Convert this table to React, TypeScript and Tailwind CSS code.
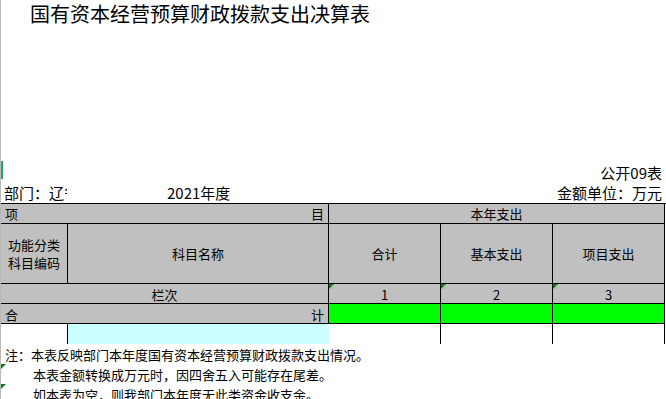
import React from 'react'

// Little Excel "number stored as text" marker in the top-left of a cell
function Flag() {
  return (
    <span className="absolute left-0 top-0 h-0 w-0 border-r-[5px] border-t-[5px] border-r-transparent border-t-[#0a7d0a]" />
  )
}

export default function App() {
  return (
    <div className="relative h-[399px] w-[666px] overflow-hidden border-l border-[#b8b8b8] bg-white font-['Noto_Sans_CJK_SC','Noto_Sans',sans-serif] text-[13px] text-black">
      <span className="absolute left-0 top-[161px] h-[18px] w-[2px] bg-[#21a366]" />

      {/* title block */}
      <div className="h-[163px]">
        <div className="pl-[29px] pt-[1px] text-[20px] leading-[26px]">国有资本经营预算财政拨款支出决算表</div>
      </div>

      <div className="flex h-[20px] items-end justify-end pr-[4px] text-[15px] leading-[20px]">公开09表</div>
      <div className="flex h-[20px] items-end text-[15px] leading-[20px]">
        <span className="w-[66px] overflow-hidden whitespace-nowrap pl-[3px]">部门：辽宁</span>
        <span className="pl-[100px]">2021年度</span>
        <span className="ml-auto pr-[4px]">金额单位：万元</span>
      </div>

      {/* table */}
      <div className="grid w-[665px] grid-cols-[67px_261px_112px_112px_112px] grid-rows-[20px_60px_20px_20px_20px] border-t border-black">
        <div className="col-span-2 flex items-center justify-between border-b border-r border-black bg-[#c0c0c0] px-[4px] pt-[1px]">
          <span>项</span>
          <span>目</span>
        </div>
        <div className="col-span-3 flex items-center justify-center border-b border-r border-black bg-[#c0c0c0] pt-[1px]">本年支出</div>

        <div className="flex flex-col items-center justify-center border-b border-r border-black bg-[#c0c0c0] pt-[1px] leading-[18px]">
          <span>功能分类</span>
          <span>科目编码</span>
        </div>
        <div className="flex items-center justify-center border-b border-r border-black bg-[#c0c0c0]">科目名称</div>
        <div className="flex items-center justify-center border-b border-r border-black bg-[#c0c0c0]">合计</div>
        <div className="flex items-center justify-center border-b border-r border-black bg-[#c0c0c0]">基本支出</div>
        <div className="flex items-center justify-center border-b border-r border-black bg-[#c0c0c0]">项目支出</div>

        <div className="col-span-2 flex items-center justify-center border-b border-r border-black bg-[#c0c0c0] pt-[3px]">栏次</div>
        <div className="relative flex items-center justify-center border-b border-r border-black bg-[#c0c0c0] pt-[3px]"><Flag />1</div>
        <div className="relative flex items-center justify-center border-b border-r border-black bg-[#c0c0c0] pt-[3px]"><Flag />2</div>
        <div className="relative flex items-center justify-center border-b border-r border-black bg-[#c0c0c0] pt-[3px]"><Flag />3</div>

        <div className="col-span-2 flex items-center justify-between border-b border-r border-black bg-[#c0c0c0] px-[4px] pt-[3px]">
          <span>合</span>
          <span>计</span>
        </div>
        <div className="border-b border-r border-black bg-[#00ff00]" />
        <div className="border-b border-r border-black bg-[#00ff00]" />
        <div className="border-b border-r border-black bg-[#00ff00]" />

        <div className="border-r border-black bg-white" />
        <div className="bg-[#ccffff]" />
        <div className="border-r border-black bg-white" />
        <div className="border-r border-black bg-white" />
        <div className="border-r border-black bg-white" />
      </div>

      {/* notes */}
      <div className="flex flex-col leading-[20px]">
        <div className="relative h-[20px] pl-[4px] pt-[1px]">注：本表反映部门本年度国有资本经营预算财政拨款支出情况。</div>
        <div className="relative h-[20px] pl-[32px] pt-[1px]"><Flag />本表金额转换成万元时，因四舍五入可能存在尾差。</div>
        <div className="relative h-[20px] pl-[32px] pt-[1px]"><Flag />如本表为空，则我部门本年度无此类资金收支余。</div>
      </div>
    </div>
  )
}
